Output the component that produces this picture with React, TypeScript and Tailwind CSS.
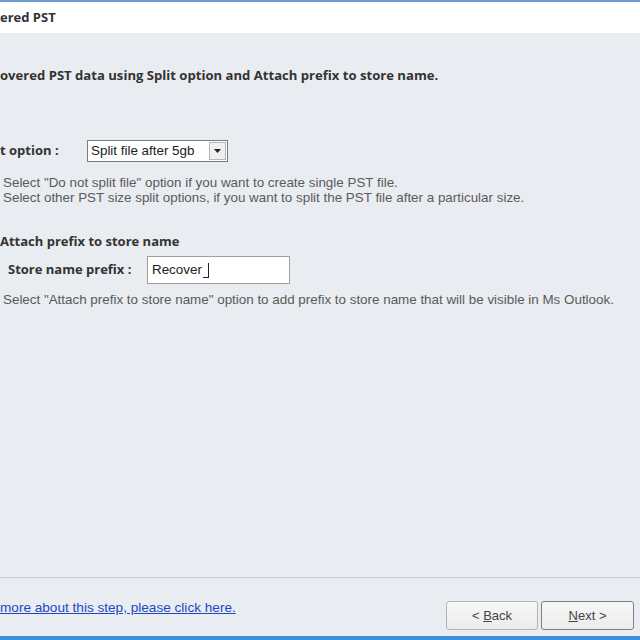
import React from 'react';

const Hint = ({ children }: { children: React.ReactNode }) => (
  <div className="text-[13.4px] leading-[15px] text-[#5a5a5a]">{children}</div>
);

export default function App() {
  return (
    <div className="flex h-[640px] w-[640px] flex-col overflow-hidden bg-[#e9ecf0] font-['Liberation_Sans',Arial,sans-serif]">
      <div className="h-[2px] bg-[#6f9ccb]" />
      <div className="flex h-[31px] items-center bg-white text-[13px] font-bold text-[#333] font-['Open_Sans',sans-serif]">
        ered PST
      </div>
      <div className="flex flex-1 flex-col">
        <div className="mt-[33px] text-[13.1px] font-bold text-[#333] font-['Open_Sans',sans-serif]">
          overed PST data using Split option and Attach prefix to store name.
        </div>

        <div className="mt-[54px] flex items-center">
          <span className="w-[87px] text-[13px] font-bold text-[#333] font-['Open_Sans',sans-serif]">t option :</span>
          <div className="flex h-[22px] w-[141px] items-center border border-[#7a7a7a] bg-white pl-[3px] text-[13.4px] text-[#222]">
            <span className="flex-1">Split file after 5gb</span>
            <span className="mr-[1px] flex h-[18px] w-[17px] items-center justify-center border border-[#b5b5b5] bg-[#f0f0f0]">
              <svg width="7" height="4" viewBox="0 0 7 4">
                <path d="M0 0h7L3.5 4z" fill="#222" />
              </svg>
            </span>
          </div>
        </div>

        <div className="mt-[13px] pl-[3px]">
          <Hint>Select &quot;Do not split file&quot; option if you want to create single PST file.</Hint>
          <Hint>Select other PST size split options, if you want to split the PST file after a particular size.</Hint>
        </div>

        <div className="mt-[27px] text-[13px] font-bold text-[#333] font-['Open_Sans',sans-serif]">
          Attach prefix to store name
        </div>

        <div className="mt-[5px] flex items-center pl-[8px]">
          <span className="w-[139px] text-[13px] font-bold text-[#333] font-['Open_Sans',sans-serif]">Store name prefix :</span>
          <div className="flex h-[28px] w-[143px] items-center border border-[#a0a0a0] bg-white pl-[4px] text-[13.4px] text-[#222]">
            Recover<span className="ml-[1px] h-[15px] w-[6px] border-b border-r border-[#222]" />
          </div>
        </div>

        <div className="mt-[8px] pl-[3px]">
          <Hint>Select &quot;Attach prefix to store name&quot; option to add prefix to store name that will be visible in Ms Outlook.</Hint>
        </div>

        <div className="flex-1" />

        <div className="border-t border-[#c9ccd1] shadow-[inset_0_1px_0_#fff]" />
        <div className="flex h-[58px] items-start justify-between pt-[24px] pr-[6px]">
          <a className="-mt-[4px] text-[13.6px] text-[#1c48c4] underline">more about this step, please click here.</a>
          <div className="-mt-[1px] flex gap-[3px]">
            <button className="h-[29px] w-[92px] rounded-[3px] border border-[#b4b4b4] bg-gradient-to-b from-[#f7f7f7] to-[#ececec] text-[13px] text-[#444]">
              &lt; <span className="underline">B</span>ack
            </button>
            <button className="h-[29px] w-[93px] rounded-[3px] border border-[#7f7f7f] bg-gradient-to-b from-[#f7f7f7] to-[#ececec] text-[13px] text-[#444]">
              <span className="underline">N</span>ext &gt;
            </button>
          </div>
        </div>
      </div>
      <div className="h-[4px] bg-[#3d8fdb]" />
    </div>
  );
}
